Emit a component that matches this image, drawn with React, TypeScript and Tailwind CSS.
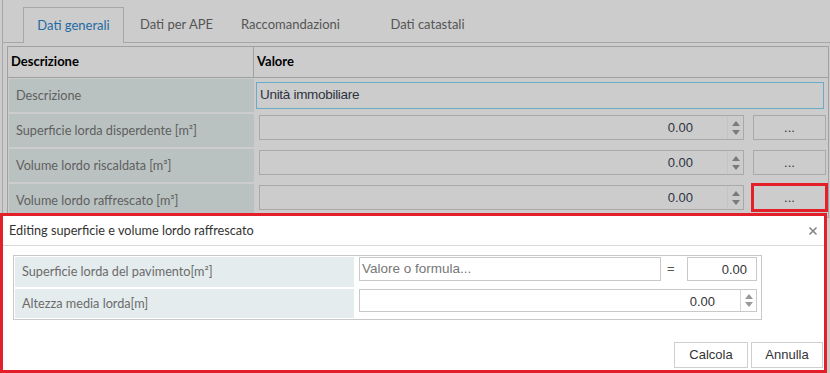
import { X } from "lucide-react";

const calibri = { fontFamily: "Lato, 'Noto Sans', sans-serif" };

function Spinner() {
	return (
		<div className="flex w-[16px] flex-col items-center justify-center gap-[4px] border-l border-[#c4c4c4]">
			<svg width="8" height="5" viewBox="0 0 8 5"><path d="M0 5 L4 0 L8 5 Z" fill="#7a7a7a" /></svg>
			<svg width="8" height="5" viewBox="0 0 8 5"><path d="M0 0 L4 5 L8 0 Z" fill="#7a7a7a" /></svg>
		</div>
	);
}

function NumberRow({ label, highlight }: { label: string; highlight?: boolean }) {
	return (
		<div className="flex h-[33px]">
			<div className="ml-[1px] flex w-[245px] items-center bg-[#b9c2c0] pl-[7px] text-[12.7px] text-[#5f5f5f]">
				{label}
			</div>
			<div className="flex items-start pl-[5px] pt-[1px]">
				<div className="flex h-[25px] w-[485px] border border-[#a9a9a9]">
					<div className="flex flex-1 items-center justify-end pr-[34px] font-['Liberation_Sans',sans-serif] text-[13px] text-[#2d3340]">0.00</div>
					<Spinner />
				</div>
				<div
					className={`ml-[9px] flex h-[25px] w-[73px] items-center justify-center border text-[13px] text-[#333] ${
						highlight ? "border-[#e3202a] outline-[2px] outline-solid outline-[#e3202a]" : "border-[#a9a9a9]"
					}`}
				>
					<span className="font-['Liberation_Sans',sans-serif] leading-none">...</span>
				</div>
			</div>
		</div>
	);
}

export default function App() {
	const tabs = [
		{ name: "Dati generali", w: "w-[101px]" },
		{ name: "Dati per APE", w: "w-[105px]" },
		{ name: "Raccomandazioni", w: "w-[123px]" },
		{ name: "Dati catastali", w: "w-[151px]" },
	];

	return (
		<div className="relative h-[373px] w-[830px] overflow-hidden bg-[#cccccc]" style={calibri}>
			<div className="ml-[2px] h-full border-l border-[#a7a7a7]">
				{/* tabs */}
				<div className="flex h-[43px] items-end border-b border-[#a7a7a7] pl-[20px]">
					{tabs.map((t, i) => (
						<div
							key={t.name}
							className={`${t.w} -mb-[1px] flex h-[36px] items-center justify-center text-[13px] ${
								i === 0 ? "border border-b-0 border-[#a7a7a7] bg-[#cccccc] text-[#1d6aa5]" : "text-[#555]"
							}`}
						>
							{t.name}
						</div>
					))}
				</div>

				{/* grid */}
				<div className="ml-[4px] mt-[3px] w-[822px] border border-[#a0a0a0]">
					<div className="flex h-[31px] border-b border-[#a0a0a0] text-[13px] font-bold text-black">
						<div className="flex w-[246px] items-center border-r border-[#a0a0a0] pl-[3px]">Descrizione</div>
						<div className="flex items-center pl-[3px]">Valore</div>
					</div>
					<div className="flex flex-col gap-[2px] pt-[1px]">
						<div className="flex h-[33px]">
							<div className="ml-[1px] flex w-[245px] items-center bg-[#b9c2c0] pl-[7px] text-[12.7px] text-[#5f5f5f]">Descrizione</div>
							<div className="pl-[2px] pt-[3px]">
								<div className="flex h-[27px] w-[568px] items-center border border-[#6aabc6] pl-[3px] font-['Liberation_Sans',sans-serif] text-[13.5px] tracking-[-0.3px] text-[#2d3340]">
									Unità immobiliare
								</div>
							</div>
						</div>
						<NumberRow label="Superficie lorda disperdente [m²]" />
						<NumberRow label="Volume lordo riscaldata [m³]" />
						<NumberRow label="Volume lordo raffrescato [m³]" highlight />
					</div>
				</div>
			</div>

			{/* editing dialog */}
			<div className="absolute left-0 top-[213px] flex h-[160px] w-[827px] flex-col border-[3px] border-[#e3202a] bg-white">
				<div className="flex h-[30px] items-center justify-between border-b border-[#d9d9d9] pl-[6px] pr-[5px]">
					<span className="text-[12.7px] text-[#333]">Editing superficie e volume lordo raffrescato</span>
					<X size={12} strokeWidth={3.5} color="#8a8a8a" />
				</div>

				<div className="ml-[10px] mt-[9px] w-[749px] border border-[#c9c9c9] p-[1px]">
					<div className="flex flex-col gap-[2px]">
						<div className="flex h-[30px]">
							<div className="flex w-[339px] items-center bg-[#e4eced] pl-[7px] text-[12.7px] text-[#6b6b6b]">
								Superficie lorda del pavimento[m²]
							</div>
							<div className="flex items-start pl-[5px]">
								<div className="flex h-[24px] w-[302px] items-center border border-[#c9c9c9] pl-[2px] font-['Liberation_Sans',sans-serif] text-[13.5px] text-[#777]">
									Valore o formula...
								</div>
								<div className="flex h-[24px] w-[26px] items-center pl-[6px] font-['Liberation_Sans',sans-serif] text-[13px] text-[#555]">=</div>
								<div className="flex h-[24px] w-[70px] items-end justify-end border border-[#c9c9c9] pr-[9px] font-['Liberation_Sans',sans-serif] text-[13px] leading-[20px] text-[#333]">
									0.00
								</div>
							</div>
						</div>
						<div className="flex h-[29px]">
							<div className="flex w-[339px] items-center bg-[#e4eced] pl-[7px] text-[12.7px] text-[#6b6b6b]">
								Altezza media lorda[m]
							</div>
							<div className="flex items-start pl-[5px]">
								<div className="flex h-[23px] w-[398px] border border-[#c9c9c9]">
									<div className="flex flex-1 items-end justify-end pr-[25px] font-['Liberation_Sans',sans-serif] text-[13px] leading-[19px] text-[#333]">0.00</div>
									<div className="flex w-[16px] flex-col items-center justify-center gap-[3px] border-l border-[#d6d6d6]">
										<svg width="8" height="5" viewBox="0 0 8 5"><path d="M0 5 L4 0 L8 5 Z" fill="#9a9a9a" /></svg>
										<svg width="8" height="5" viewBox="0 0 8 5"><path d="M0 0 L4 5 L8 0 Z" fill="#9a9a9a" /></svg>
									</div>
								</div>
							</div>
						</div>
					</div>
				</div>

				<div className="mb-[2px] mr-[1px] mt-auto flex justify-end gap-[3px] font-['Liberation_Sans',sans-serif] text-[13px] text-[#333]">
					<button className="h-[26px] w-[74px] border border-[#cfcfcf] bg-white">Calcola</button>
					<button className="h-[26px] w-[72px] border border-[#cfcfcf] bg-white">Annulla</button>
				</div>
			</div>
		</div>
	);
}
